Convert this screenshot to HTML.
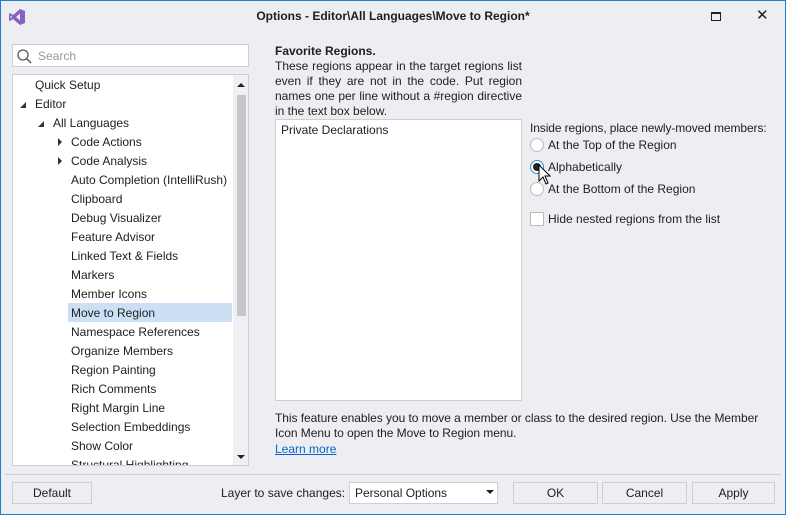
<!DOCTYPE html>
<html><head><style>
*{margin:0;padding:0;box-sizing:border-box}
body{width:786px;height:515px;background:#eeeef2;font-family:"Liberation Sans",sans-serif;font-size:12px;color:#1e1e1e;position:relative;overflow:hidden}
.win{position:absolute;left:0;top:0;width:786px;height:515px;border:1px solid #1c7fd4}
.a{position:absolute;white-space:nowrap}
.tree{position:absolute;left:12px;top:74px;width:237px;height:392px;background:#fff;border:1px solid #ccced8;overflow:hidden}
.row{position:absolute;height:19px;line-height:19px;font-size:12px}
.btn{position:absolute;top:482px;height:22px;border:1px solid #ccced8;background:#eceef2;text-align:center;line-height:20px}
.tri{position:absolute;width:0;height:0}
</style></head><body><div class="win"></div>
<svg class="a" style="left:8px;top:8px" width="18" height="18" viewBox="0 0 18 18"><path d="M12 1 L17 3 V15 L12 17 L5 11 L2 13 L1 12 V6 L2 5 L5 7 Z M12 5.5 L8 9 L12 12.5 Z M2.5 7.5 V10.5 L4.3 9 Z" fill="#8661c5" fill-rule="evenodd"/></svg>
<div class="a" style="left:0;width:786px;top:9px;text-align:center;font-weight:bold;font-size:12px">Options - Editor\All Languages\Move to Region*</div>
<div class="a" style="left:711px;top:12px;width:10px;height:9px;border:1px solid #222;border-top-width:2px"></div>
<div class="a" style="left:756px;top:6px;font-size:15px">✕</div>
<div class="a" style="left:12px;top:44px;width:237px;height:23px;background:#fff;border:1px solid #ccced8"></div>
<svg class="a" style="left:16px;top:48px" width="16" height="16"><circle cx="7" cy="7" r="5" fill="none" stroke="#555" stroke-width="1.3"/><line x1="10.5" y1="10.5" x2="15" y2="15" stroke="#555" stroke-width="1.5"/></svg>
<div class="a" style="left:38px;top:49px;color:#999">Search</div>
<div class="tree">
<div class="a" style="left:55px;top:228px;width:164px;height:19px;background:#cce0f5"></div>
<div class="a" style="left:220px;top:0;width:16px;height:390px;background:#f0f0f2"></div>
<div class="a" style="left:224px;top:20px;width:9px;height:221px;background:#c6c7cd"></div>
<div class="tri" style="left:224px;top:8px;border:4px solid transparent;border-bottom:4px solid #222;border-top:0"></div>
<div class="tri" style="left:224px;top:380px;border:4px solid transparent;border-top:4px solid #222;border-bottom:0"></div>
<div class="tri" style="left:7px;top:27px;border-left:6px solid transparent;border-bottom:6px solid #333"></div>
<div class="tri" style="left:25px;top:46px;border-left:6px solid transparent;border-bottom:6px solid #333"></div>
<div class="tri" style="left:45px;top:63px;border:4px solid transparent;border-left:4px solid #333;border-right:0"></div>
<div class="tri" style="left:45px;top:82px;border:4px solid transparent;border-left:4px solid #333;border-right:0"></div>
<div class="row" style="left:22px;top:1px">Quick Setup</div>
<div class="row" style="left:22px;top:20px">Editor</div>
<div class="row" style="left:40px;top:39px">All Languages</div>
<div class="row" style="left:58px;top:58px">Code Actions</div>
<div class="row" style="left:58px;top:77px">Code Analysis</div>
<div class="row" style="left:58px;top:96px">Auto Completion (IntelliRush)</div>
<div class="row" style="left:58px;top:115px">Clipboard</div>
<div class="row" style="left:58px;top:134px">Debug Visualizer</div>
<div class="row" style="left:58px;top:153px">Feature Advisor</div>
<div class="row" style="left:58px;top:172px">Linked Text &amp; Fields</div>
<div class="row" style="left:58px;top:191px">Markers</div>
<div class="row" style="left:58px;top:210px">Member Icons</div>
<div class="row" style="left:58px;top:229px">Move to Region</div>
<div class="row" style="left:58px;top:248px">Namespace References</div>
<div class="row" style="left:58px;top:267px">Organize Members</div>
<div class="row" style="left:58px;top:286px">Region Painting</div>
<div class="row" style="left:58px;top:305px">Rich Comments</div>
<div class="row" style="left:58px;top:324px">Right Margin Line</div>
<div class="row" style="left:58px;top:343px">Selection Embeddings</div>
<div class="row" style="left:58px;top:362px">Show Color</div>
<div class="row" style="left:58px;top:381px">Structural Highlighting</div>
</div>
<div class="a" style="left:275px;top:44px;font-weight:bold">Favorite Regions.</div>
<div class="a" style="left:275px;top:59px;width:247px;white-space:normal;line-height:15px;text-align:justify">These regions appear in the target regions list even if they are not in the code. Put region names one per line without a #region directive in the text box below.</div>
<div class="a" style="left:275px;top:119px;width:247px;height:282px;background:#fff;border:1px solid #ccced8"></div>
<div class="a" style="left:281px;top:123px">Private Declarations</div>
<div class="a" style="left:530px;top:121px;letter-spacing:-0.1px">Inside regions, place newly-moved members:</div>
<div class="a" style="left:530px;top:138px;width:14px;height:14px;border-radius:50%;background:#fff;border:1px solid #bbb"></div>
<div class="a" style="left:548px;top:138px">At the Top of the Region</div>
<div class="a" style="left:530px;top:160px;width:14px;height:14px;border-radius:50%;background:#fff;border:1px solid #3a8ad8"></div>
<div class="a" style="left:533px;top:163px;width:8px;height:8px;border-radius:50%;background:#222"></div>
<div class="a" style="left:548px;top:160px">Alphabetically</div>
<div class="a" style="left:530px;top:182px;width:14px;height:14px;border-radius:50%;background:#fff;border:1px solid #bbb"></div>
<div class="a" style="left:548px;top:182px">At the Bottom of the Region</div>
<svg class="a" style="left:538px;top:164px" width="14" height="22"><path d="M1 1 V17 L5 13 L8 20 L10 19 L7 12 L12 12 Z" fill="#fff" stroke="#000"/></svg>
<div class="a" style="left:530px;top:212px;width:14px;height:14px;background:#fff;border:1px solid #bbb"></div>
<div class="a" style="left:548px;top:212px">Hide nested regions from the list</div>
<div class="a" style="left:275px;top:411px;line-height:15px;letter-spacing:-0.05px">This feature enables you to move a member or class to the desired region. Use the Member<br>Icon Menu to open the Move to Region menu.</div>
<div class="a" style="left:275px;top:442px;color:#0066cc;text-decoration:underline">Learn more</div>
<div class="a" style="left:5px;top:474px;width:776px;height:1px;background:#ccced8"></div>
<div class="btn" style="left:12px;width:80px">Default</div>
<div class="a" style="left:221px;top:486px">Layer to save changes:</div>
<div class="a" style="left:349px;top:482px;width:149px;height:22px;background:#fff;border:1px solid #ccced8;padding-left:5px;line-height:20px">Personal Options</div>
<div class="tri" style="left:486px;top:490px;border:4px solid transparent;border-top:4px solid #222;border-bottom:0"></div>
<div class="btn" style="left:513px;width:85px">OK</div>
<div class="btn" style="left:602px;width:85px">Cancel</div>
<div class="btn" style="left:692px;width:83px">Apply</div>
</body></html>
